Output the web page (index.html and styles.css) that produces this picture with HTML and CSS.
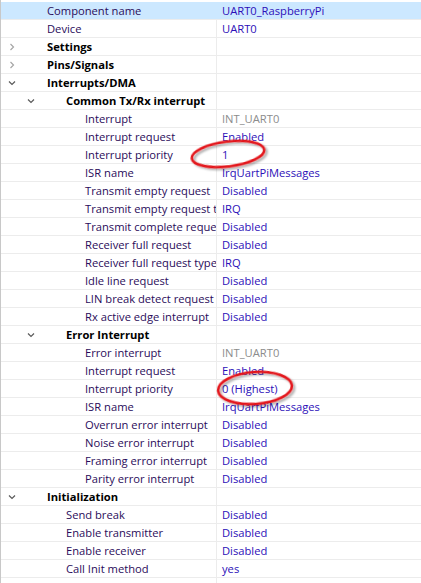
FILE: index.html
```html
<!DOCTYPE html>
<html>
<head>
<meta charset="utf-8">
<link rel="stylesheet" href="styles.css">
</head>
<body>
<div class="tree">
  <div class="row selected"><div class="label l0"><span class="tw"></span><span class="txt">Component name</span></div><div class="val">UART0_RaspberryPi</div></div>
  <div class="row"><div class="label l0"><span class="tw"></span><span class="txt">Device</span></div><div class="val">UART0</div></div>
  <div class="row cat"><div class="label l0"><span class="tw"><svg class="chev closed" viewBox="0 0 8 8"><polyline points="2.5,1 5.5,4 2.5,7"/></svg></span><span class="txt">Settings</span></div><div class="val"></div></div>
  <div class="row cat"><div class="label l0"><span class="tw"><svg class="chev closed" viewBox="0 0 8 8"><polyline points="2.5,1 5.5,4 2.5,7"/></svg></span><span class="txt">Pins/Signals</span></div><div class="val"></div></div>
  <div class="row cat"><div class="label l0"><span class="tw"><svg class="chev open" viewBox="0 0 8 8"><polyline points="1,2.5 4,5.5 7,2.5"/></svg></span><span class="txt">Interrupts/DMA</span></div><div class="val"></div></div>
  <div class="row cat"><div class="label l1"><span class="tw"><svg class="chev open" viewBox="0 0 8 8"><polyline points="1,2.5 4,5.5 7,2.5"/></svg></span><span class="txt">Common Tx/Rx interrupt</span></div><div class="val"></div></div>
  <div class="row"><div class="label l2"><span class="tw"></span><span class="txt">Interrupt</span></div><div class="val dim">INT_UART0</div></div>
  <div class="row"><div class="label l2"><span class="tw"></span><span class="txt">Interrupt request</span></div><div class="val">Enabled</div></div>
  <div class="row"><div class="label l2"><span class="tw"></span><span class="txt">Interrupt priority</span></div><div class="val">1</div></div>
  <div class="row"><div class="label l2"><span class="tw"></span><span class="txt">ISR name</span></div><div class="val">IrqUartPiMessages</div></div>
  <div class="row"><div class="label l2"><span class="tw"></span><span class="txt">Transmit empty request</span></div><div class="val">Disabled</div></div>
  <div class="row"><div class="label l2"><span class="tw"></span><span class="txt">Transmit empty request t</span></div><div class="val">IRQ</div></div>
  <div class="row"><div class="label l2"><span class="tw"></span><span class="txt">Transmit complete reque</span></div><div class="val">Disabled</div></div>
  <div class="row"><div class="label l2"><span class="tw"></span><span class="txt">Receiver full request</span></div><div class="val">Disabled</div></div>
  <div class="row"><div class="label l2"><span class="tw"></span><span class="txt">Receiver full request type</span></div><div class="val">IRQ</div></div>
  <div class="row"><div class="label l2"><span class="tw"></span><span class="txt">Idle line request</span></div><div class="val">Disabled</div></div>
  <div class="row"><div class="label l2"><span class="tw"></span><span class="txt">LIN break detect request</span></div><div class="val">Disabled</div></div>
  <div class="row"><div class="label l2"><span class="tw"></span><span class="txt">Rx active edge interrupt</span></div><div class="val">Disabled</div></div>
  <div class="row cat"><div class="label l1"><span class="tw"><svg class="chev open" viewBox="0 0 8 8"><polyline points="1,2.5 4,5.5 7,2.5"/></svg></span><span class="txt">Error Interrupt</span></div><div class="val"></div></div>
  <div class="row"><div class="label l2"><span class="tw"></span><span class="txt">Error interrupt</span></div><div class="val dim">INT_UART0</div></div>
  <div class="row"><div class="label l2"><span class="tw"></span><span class="txt">Interrupt request</span></div><div class="val">Enabled</div></div>
  <div class="row"><div class="label l2"><span class="tw"></span><span class="txt">Interrupt priority</span></div><div class="val">0 (Highest)</div></div>
  <div class="row"><div class="label l2"><span class="tw"></span><span class="txt">ISR name</span></div><div class="val">IrqUartPiMessages</div></div>
  <div class="row"><div class="label l2"><span class="tw"></span><span class="txt">Overrun error interrupt</span></div><div class="val">Disabled</div></div>
  <div class="row"><div class="label l2"><span class="tw"></span><span class="txt">Noise error interrupt</span></div><div class="val">Disabled</div></div>
  <div class="row"><div class="label l2"><span class="tw"></span><span class="txt">Framing error interrupt</span></div><div class="val">Disabled</div></div>
  <div class="row"><div class="label l2"><span class="tw"></span><span class="txt">Parity error interrupt</span></div><div class="val">Disabled</div></div>
  <div class="row cat"><div class="label l0"><span class="tw"><svg class="chev open" viewBox="0 0 8 8"><polyline points="1,2.5 4,5.5 7,2.5"/></svg></span><span class="txt">Initialization</span></div><div class="val"></div></div>
  <div class="row"><div class="label l1"><span class="tw"></span><span class="txt">Send break</span></div><div class="val">Disabled</div></div>
  <div class="row"><div class="label l1"><span class="tw"></span><span class="txt">Enable transmitter</span></div><div class="val">Disabled</div></div>
  <div class="row"><div class="label l1"><span class="tw"></span><span class="txt">Enable receiver</span></div><div class="val">Disabled</div></div>
  <div class="row"><div class="label l1"><span class="tw"></span><span class="txt">Call Init method</span></div><div class="val">yes</div></div>
  <div class="filler"><div class="label"></div><div class="val"></div></div>
</div>
<svg class="marks" width="421" height="583" viewBox="0 0 421 583">
  <defs>
    <filter id="sh" x="-20%" y="-40%" width="140%" height="180%">
      <feGaussianBlur in="SourceAlpha" stdDeviation="1.2"/>
      <feOffset dx="1.5" dy="1.5" result="b"/>
      <feComponentTransfer><feFuncA type="linear" slope="0.35"/></feComponentTransfer>
      <feMerge><feMergeNode/><feMergeNode in="SourceGraphic"/></feMerge>
    </filter>
  </defs>
  <ellipse cx="228" cy="154" rx="36.5" ry="12.5" transform="rotate(-7 228 154)" class="ring" filter="url(#sh)"/>
  <ellipse cx="255" cy="388" rx="37" ry="16" transform="rotate(-4 255 388)" class="ring" filter="url(#sh)"/>
</svg>
</body>
</html>
```
FILE: styles.css
```css
html, body {
  margin: 0;
  padding: 0;
  background: #fff;
}
body {
  width: 421px;
  height: 583px;
  overflow: hidden;
  position: relative;
  font-family: "Open Sans", "Noto Sans", sans-serif;
  font-size: 11.2px;
}
.tree {
  display: flex;
  flex-direction: column;
  padding-top: 2px;
  border-left: 1px solid #c8c8c8;
  height: 581px;
}
.row, .filler {
  display: grid;
  grid-template-columns: 216px 1fr;
  height: 17px;
  border-bottom: 1px solid #ececec;
  line-height: 17px;
}
.filler {
  flex: 1;
  border-bottom: none;
}
.label {
  display: flex;
  align-items: center;
  border-right: 1px solid #ececec;
  overflow: hidden;
  white-space: nowrap;
  color: #2a0c5a;
}
.label.l1 { padding-left: 19px; }
.label.l2 { padding-left: 38px; }
.tw {
  flex: 0 0 46px;
  height: 17px;
  display: flex;
  align-items: center;
  padding-left: 7px;
  box-sizing: border-box;
}
.chev {
  width: 8px;
  height: 8px;
  fill: none;
  stroke-width: 1.2;
}
.chev.closed { stroke: #a6a6a6; }
.chev.open { stroke: #5a5a5a; }
.txt { white-space: nowrap; }
.cat .label { color: #000; font-weight: bold; }
.val {
  padding-left: 5px;
  color: #2c0fb8;
  white-space: nowrap;
  overflow: hidden;
}
.val.dim { color: #8c8c8c; }
.selected { background: #cce8ff; }
.selected .label { border-right-color: #cce8ff; }
.marks {
  position: absolute;
  left: 0;
  top: 0;
  pointer-events: none;
}
.ring {
  fill: none;
  stroke: #e3191b;
  stroke-width: 2.6;
}
```
